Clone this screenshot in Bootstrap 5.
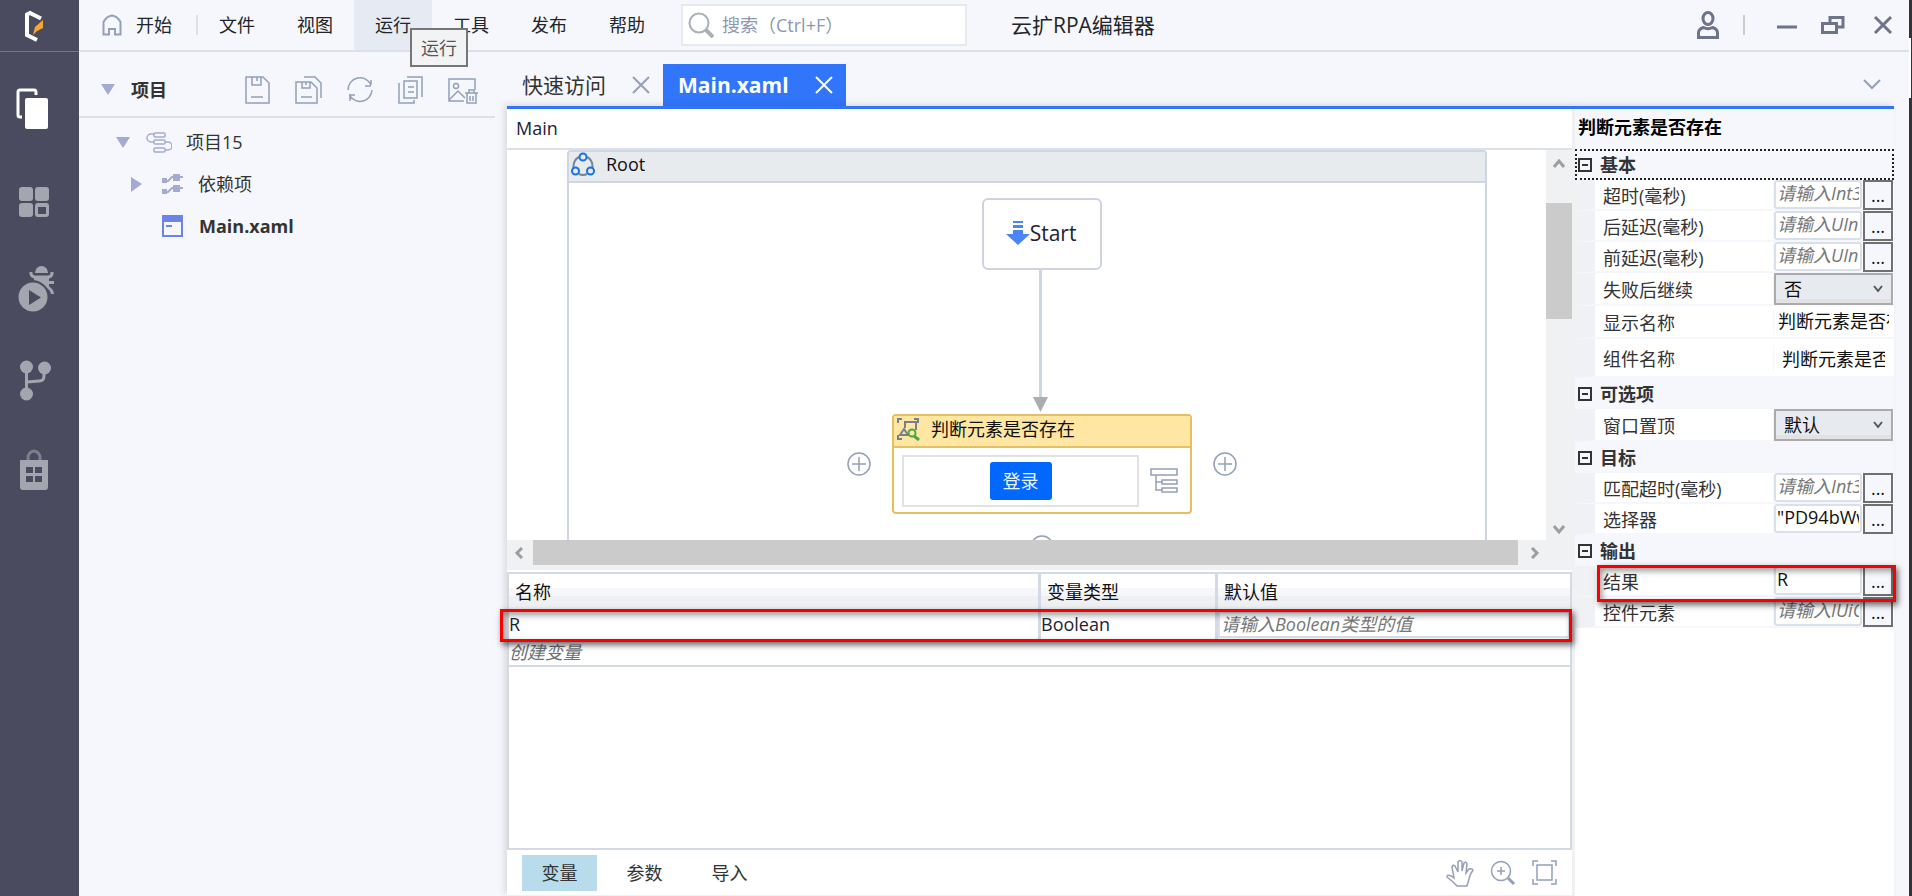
<!DOCTYPE html>
<html lang="zh-CN">
<head>
<meta charset="utf-8">
<meta name="viewport" content="width=device-width, initial-scale=1">
<title>云扩RPA编辑器</title>
<link href="https://cdn.jsdelivr.net/npm/bootstrap@5.3.0/dist/css/bootstrap.min.css" rel="stylesheet">
<style>
  body { font: 18px/24px "Open Sans", "Noto Sans CJK SC", sans-serif; color: #333; background: #f6f7fc; }
  button { font: inherit; color: inherit; background: none; border: 0; padding: 0; }
  input, select { font: inherit; border-radius: 0; }
  a { color: inherit; text-decoration: none; }
  svg { display: block; flex: none; fill: none; stroke: #93a0b8; stroke-width: 2; }

  .edge { width: 3px; background: linear-gradient(#333 38px, #fff 38px, #fff 98px, #333 98px); border-right: 1px solid #333; }

  .rail { width: 79px; background: #4a4b5e; }
  .rail-logo { height: 52px; border-bottom: 1px solid #71768a; padding-left: 23px; }
  .rail-btn { height: 90px; padding-left: 14px; }
  .rail-btn svg { fill: #a3a5af; stroke: none; }
  .rail-list { padding-top: 12px; }

  .topbar { height: 52px; border-bottom: 2px solid #dbe0ea; }
  .menu-item { width: 78px; height: 50px; }
  .menu-item.active { background: #e5eaf3; }
  .menu-home { padding-left: 23px; gap: 14px; height: 50px; width: 117px; }
  .split { width: 2px; height: 20px; background: #dbe0ea; }
  .split.dim { background: #ccc; }
  .tip { left: 56px; top: 28px; width: 58px; height: 39px; border: 2px solid #767676; background: #f2f3f5; color: #575757; z-index: 5; }
  .search { width: 286px; height: 42px; background: #fff; border: 2px solid #e5eaf1; margin-left: 15px; padding-left: 5px; gap: 8px; }
  .search input { border: 0; outline: 0; padding: 0; width: 230px; }
  .search input::placeholder { color: #8e98b0; font-style: normal; }
  .app-title { font-size: 21px; margin-left: 44px; }
  .win-tools { margin-right: 16px; }
  .win-tools svg { stroke: #6d7489; stroke-width: 3; }

  .explorer { width: 416px; margin-right: 12px; }
  .explorer-head { height: 66px; border-bottom: 2px solid #dbe0ea; padding: 12px 17px 0 22px; }
  .explorer-tools { gap: 25px; }
  .tree-list { padding-top: 3px; }
  .tree-list li { height: 42px; }
  .tree-list .lv1 { padding-left: 37px; }
  .tree-list .lv2 { padding-left: 52px; }
  .tree-list .lv3 { padding-left: 83px; }
  .tree-list .glyph { margin: 0 14px 0 16px; }
  .caret { fill: #a3abd1; stroke: none; }

  .tabs { height: 54px; }
  .doc-tab { height: 42px; width: 156px; font-size: 21px; padding: 0 13px 0 15px; }
  .doc-tab.active { background: #3175fb; color: #fff; font-weight: 700; width: 183px; }
  .doc-tab.active svg { stroke: #fff; }
  .work { border-top: 3px solid #3175fb; box-shadow: -3px -2px 6px rgba(60, 60, 60, .14); margin-right: 15px; }
  .crumb { height: 41px; border-bottom: 2px solid #dbe0ea; padding-left: 9px; padding-bottom: 1px; }
  .editor { background: #fff; color: #1c2333; min-width: 0; }

  .stage { height: 390px; }
  .free-canvas { background: #fff; overflow: hidden; }
  .root-box { left: 60px; right: 59px; top: 0; height: 420px; border: 2px solid #cfd6e3; border-radius: 4px 4px 0 0; }
  .root-head { height: 31px; background: #e7ebee; border-bottom: 2px solid #cfd6e3; color: #111; gap: 11px; padding-left: 2px; padding-bottom: 5px; }
  .start-node { left: 475px; top: 48px; width: 120px; height: 72px; border: 2px solid #cfd3e1; border-radius: 6px; background: #fff; font-size: 21px; padding: 0 2px 2px 0; }
  .wires { left: 0; top: 0; }
  .act-node { left: 385px; top: 264px; width: 300px; height: 100px; border: 2px solid #e6c060; border-radius: 4px; background: #fff; }
  .act-head { height: 32px; background: #ffe6a2; border-bottom: 2px solid #e6c060; color: #111; gap: 11px; padding: 0 2px 4px; }
  .act-body { padding: 8px 12px 6px 8px; height: 64px; }
  .shot { width: 237px; height: 52px; border: 2px solid #e2e2e2; }
  .login-btn { width: 62px; height: 38px; background: #0068ff; color: #e6f4ff; border-radius: 3px; }
  .plus-l { left: 340px; top: 302px; }
  .plus-r { left: 706px; top: 302px; }
  .plus-b { left: 523px; top: 385px; }

  .vbar { width: 26px; background: #f0f1f3; padding-top: 8px; }
  .vthumb { height: 116px; background: #cbcbcb; margin-top: 33px; }
  .vbar svg, .hbar svg { stroke: #9c9ea3; stroke-width: 3; }
  .hbar { height: 30px; background: #f0f1f3; padding: 0 24px 5px 7px; }
  .hthumb { height: 25px; background: #cbcbcb; margin: 0 10px 0 7px; }

  .vars { border: 2px solid #d3dae6; margin-top: 2px; }
  .var-table { table-layout: fixed; width: 100%; border-collapse: collapse; }
  .var-table .c-name { width: 50%; }
  .var-table .c-type { width: 177px; }
  .var-table th { font-weight: 400; color: #111; height: 35px; padding: 0 6px; background: linear-gradient(#fff 14px, #f6f7fb 14px, #f6f7fb 22px, #eff0f3 22px); border-right: 3px solid #d3dae6; }
  .var-table td { height: 31px; padding: 0 0 1px; border-right: 3px solid #d3dae6; }
  .var-table th:last-child, .var-table td:last-child { border-right: 0; }
  .var-table tr.new td { height: 24px; border-right: 0; border-bottom: 2px solid #d3dae6; color: #6b6f76; font-style: italic; }
  .var-table input { border: 2px solid #dbe1ec; width: 100%; height: 27px; padding: 0 1px 1px; outline: 0; display: block; }
  input::placeholder { color: #777; font-style: italic; opacity: 1; }
  .callout { position: absolute; border: 3px solid #f80000; box-shadow: 2px 3px 6px rgba(0, 0, 0, .6), inset 2px 3px 6px rgba(0, 0, 0, .4); pointer-events: none; z-index: 3; }
  .callout-var { left: -9px; right: -2px; top: 35px; height: 33px; }
  .callout-prop { left: 2px; right: -2px; top: -1px; height: 37px; }

  .foot { height: 46px; padding-left: 15px; padding-right: 15px; border-bottom: 1px solid #f0f1f3; color: #333; }
  .foot-tab { height: 36px; width: 75px; margin-right: 10px; }
  .foot-tab.active { background: #b9dcec; }

  .props { width: 322px; background: #fff; border-left: 3px solid #f0f1f3; }
  .props-title { height: 40px; background: #f6f7fc; color: #000; font-weight: 700; padding: 0 0 4px 3px; }
  .cat { height: 31px; background: #f6f7fc; font-weight: 700; padding-left: 3px; gap: 8px; }
  .cat.focus { border: 2px dotted #222; padding-left: 1px; }
  .cat svg { stroke: #333; }
  .prop { height: 31px; border-left: 20px solid #f0f1f4; border-bottom: 2px solid #f6f7fc; padding-right: 1px; }
  .prop.h-mid { height: 33px; }
  .prop.h-tall { height: 39px; }
  .prop label { width: 179px; padding: 2px 0 0 8px; border-right: 1px solid #f6f7fc; }
  .prop input { flex: 1; min-width: 0; height: 29px; padding: 0 1px 3px; border: 2px solid #d9e0ec; border-radius: 3px; outline: 0; color: #111; }
  .prop input.bare { border: 0; padding: 0 4px 3px; }
  .prop input.inset { border: 0; padding: 0; margin: 0 8px; }
  .prop select { flex: 1; min-width: 0; height: 32px; padding: 1px 8px 0; border: 2px solid #ababab; color: #111; appearance: none; background: linear-gradient(#e7ebef 24px, #e2e2e2 24px); }
  .prop .pick { position: relative; flex: 1; display: flex; }
  .prop .pick svg { position: absolute; right: 10px; top: 12px; stroke: #555; pointer-events: none; }
  .more { width: 30px; height: 30px; border: 2px solid #707070; background: #f6f7fc; color: #111; margin-left: 1px; line-height: 26px; }
</style>
</head>
<body class="d-flex vh-100 overflow-hidden">

<nav class="rail d-flex flex-column flex-shrink-0" aria-label="侧栏">
  <div class="rail-logo d-flex align-items-center">
    <svg width="22" height="32" viewBox="0 0 22 32"><path d="M18 8.500 7 3 4 4.500v20.500l10 5" style="stroke:#fff;stroke-width:4"/><path d="M20 10v8l-6 3-4 4 2-8z" style="fill:#fba62c;stroke:none"/></svg>
  </div>
  <div class="rail-list d-flex flex-column">
    <button class="rail-btn" aria-label="项目"><svg width="40" height="50" viewBox="0 0 40 50"><path d="M22 11V8q0-2-2-2H6Q4 6 4 8v23q0 2 2 2h2" style="fill:none;stroke:#fff;stroke-width:3"/><rect x="11" y="14" width="23" height="31" rx="2" style="fill:#fff"/></svg></button>
    <button class="rail-btn" aria-label="组件"><svg width="40" height="50" viewBox="0 0 40 50"><rect x="5" y="13" width="14" height="14" rx="3"/><rect x="21" y="13" width="14" height="14" rx="3"/><rect x="5" y="29" width="14" height="14" rx="3"/><path fill-rule="evenodd" d="M24 29h8q3 0 3 3v8q0 3-3 3h-8q-3 0-3-3v-8q0-3 3-3zm0 4v7h8v-7z"/></svg></button>
    <button class="rail-btn" aria-label="调试"><svg width="40" height="50" viewBox="0 0 40 50"><path d="M21 9a6.500 7 0 0 1 13 0z"/><path d="M17 8v2q1 3 4 3h13q3 0 4-3V8" style="fill:none;stroke:#a3a5af;stroke-width:3"/><path d="M20 13h15v9l3 3q2 2 2 5h-3q0-3-3-5-6-8-14-9z"/><path d="M34 18.500h6" style="stroke:#a3a5af;stroke-width:3"/><circle cx="19" cy="33" r="14.500"/><path d="M15 26v15l12-7.500z" style="fill:#4a4b5e"/></svg></button>
    <button class="rail-btn" aria-label="版本"><svg width="40" height="50" viewBox="0 0 40 50"><circle cx="12.500" cy="13" r="6.500"/><circle cx="30.500" cy="14" r="6.500"/><circle cx="12.500" cy="40" r="6.500"/><path d="M12.500 13v27M13 28l12-1q5 0 5-5v-6" style="fill:none;stroke:#a3a5af;stroke-width:3"/></svg></button>
    <button class="rail-btn" aria-label="市场"><svg width="40" height="50" viewBox="0 0 40 50"><path d="M14 17v-3a6 7 0 0 1 12 0v3" style="fill:none;stroke:#7d7f8b;stroke-width:3"/><path fill-rule="evenodd" d="M6 16h28v27q0 3-3 3H9q-3 0-3-3zm6 7v6h7v-6zm9 0v6h7v-6zm-9 9v6h7v-6zm9 0v6h7v-6z"/></svg></button>
  </div>
</nav>

<div class="d-flex flex-column flex-grow-1 overflow-hidden">
  <header class="topbar d-flex align-items-center flex-shrink-0 text-dark">
    <button class="menu-home d-flex align-items-center"><svg width="20" height="22" viewBox="0 0 20 22"><path d="M1.500 8Q5 2 10 1.500 15 2 18.500 8v12.500H13V15H7v5.500H1.500z"/></svg>开始</button>
    <span class="split"></span>
    <nav class="d-flex" aria-label="菜单">
      <button class="menu-item">文件</button>
      <button class="menu-item">视图</button>
      <div class="position-relative"><button class="menu-item active">运行</button><div class="tip position-absolute d-flex align-items-center justify-content-center" role="tooltip">运行</div></div>
      <button class="menu-item">工具</button>
      <button class="menu-item">发布</button>
      <button class="menu-item">帮助</button>
    </nav>
    <div class="search d-flex align-items-center">
      <svg width="26" height="26" viewBox="0 0 26 26" style="stroke:#aab0b6"><circle cx="11" cy="11" r="9.500"/><path d="m18 18 7 7" style="stroke-width:4"/></svg>
      <input type="text" placeholder="搜索（Ctrl+F）" aria-label="搜索">
    </div>
    <span class="app-title">云扩RPA编辑器</span>
    <div class="win-tools d-flex align-items-center ms-auto">
      <button aria-label="用户"><svg width="22" height="28" viewBox="0 0 22 28"><ellipse cx="11" cy="7.500" rx="5" ry="6"/><path d="M1.500 26.500V22q0-4 5-5.500Q11 19 15.500 16.500q5 1.500 5 5.500v4.500z"/></svg></button>
      <span class="split dim ms-4 me-4"></span>
      <button class="ms-2" aria-label="最小化"><svg width="20" height="20" viewBox="0 0 20 20"><path d="M0 12h20"/></svg></button>
      <button class="ms-4" aria-label="还原"><svg width="24" height="20" viewBox="0 0 24 20"><path d="M1.500 8.500h14v9h-14zM9 8V2.500h13V12h-6"/></svg></button>
      <button class="ms-4 ps-1" aria-label="关闭"><svg width="20" height="20" viewBox="0 0 20 20"><path d="m2 2 16 16M18 2 2 18"/></svg></button>
    </div>
  </header>

  <div class="d-flex flex-grow-1 overflow-hidden">
    <aside class="explorer flex-shrink-0">
      <div class="explorer-head d-flex align-items-center">
        <svg class="caret" width="14" height="12" viewBox="0 0 14 12"><path d="M0 0h14L7 11z"/></svg>
        <strong class="ms-3">项目</strong>
        <div class="explorer-tools d-flex ms-auto">
          <button aria-label="保存"><svg width="25" height="28" viewBox="0 0 25 28" style="stroke-width:1.500"><path d="M1 1h17l6 6v20H1zM7 1v8h9V1M12 1v4M6 21h12"/></svg></button>
          <button aria-label="全部保存"><svg width="27" height="28" viewBox="0 0 27 28" style="stroke-width:1.500"><path d="M1 6h15l6 6v15H1zM7 6v6h8V6M11 6v3M6 21h11M9 1h11l6 6v15"/></svg></button>
          <button aria-label="刷新"><svg width="26" height="28" viewBox="0 0 26 28" style="stroke-width:1.500"><path d="M1 14A12 12 0 0 1 24 9V4M24 10h-6M25 14A12 12 0 0 1 3 20v5M2 19h6"/></svg></button>
          <button aria-label="复制"><svg width="25" height="28" viewBox="0 0 25 28" style="stroke-width:1.500"><path d="M6 5h13v17H6zM9 1h15v20M1 7v20h15v-3M10 11h6M10 16h6"/></svg></button>
          <button aria-label="清理图片"><svg width="30" height="28" viewBox="0 0 30 28" style="stroke-width:1.500"><path d="M16 25H1V3h26v11M1 24l9-9 7 7"/><circle cx="8" cy="10" r="2.500"/><path d="M17 17h13M21 17v-3h5v3M19 17v10h9V17M22 20v5M25 20v5"/></svg></button>
        </div>
      </div>
      <ul class="tree-list list-unstyled m-0">
        <li class="lv1 d-flex align-items-center"><svg class="caret" width="14" height="12" viewBox="0 0 14 12"><path d="M0 1h14L7 12z"/></svg>
          <svg class="glyph" width="26" height="22" viewBox="0 0 26 22" style="stroke:#a3abd1;stroke-width:1.500"><rect x="8" y="2" width="11" height="4" rx="1"/><rect x="8" y="9" width="11" height="4" rx="1"/><rect x="8" y="17" width="11" height="4" rx="1"/><path d="M8 3H5a4 4 0 0 0 0 8h3M19 11h3a4 4 0 0 1 0 8h-3"/></svg>项目15</li>
        <li class="lv2 d-flex align-items-center"><svg class="caret" width="12" height="16" viewBox="0 0 12 16"><path d="M0 1v15l11-8z"/></svg>
          <svg class="glyph" width="25" height="22" viewBox="0 0 25 22" style="stroke:#a3abd1;fill:#a3abd1"><path d="M4 8h5l4-4h11M4 19h5l4-4h11" fill="none"/><path d="M4 6h3v3H4zM4 17h3v3H4zM15 2h5v5h-5zM15 13h5v5h-5z"/></svg>依赖项</li>
        <li class="lv3 d-flex align-items-center gap-3"><svg width="21" height="22" viewBox="0 0 21 22" style="stroke:#6a84e8"><path d="M1 1h19v20H1z"/><path d="M0 0h21v7H0z" style="fill:#6a84e8;stroke:none"/><path d="M4 11h6"/></svg><strong>Main.xaml</strong></li>
      </ul>
    </aside>

    <main class="d-flex flex-column flex-grow-1">
      <div class="tabs d-flex align-items-end flex-shrink-0">
        <div class="doc-tab d-flex align-items-center justify-content-between"><a href="#">快速访问</a><button aria-label="关闭快速访问"><svg width="18" height="18" viewBox="0 0 18 18"><path d="m1 1 16 16M17 1 1 17"/></svg></button></div>
        <div class="doc-tab active d-flex align-items-center justify-content-between"><a href="#">Main.xaml</a><button aria-label="关闭Main.xaml"><svg width="18" height="18" viewBox="0 0 18 18"><path d="m1 1 16 16M17 1 1 17"/></svg></button></div>
        <button class="ms-auto me-4 mb-3" aria-label="更多标签"><svg class="me-1" width="18" height="12" viewBox="0 0 18 12"><path d="m1 2 8 8 8-8"/></svg></button>
      </div>

      <div class="work d-flex flex-grow-1">
        <section class="editor d-flex flex-column flex-grow-1">
          <div class="crumb d-flex align-items-center flex-shrink-0">Main</div>
          <div class="stage d-flex flex-shrink-0">
            <div class="free-canvas position-relative flex-grow-1">
              <div class="root-box position-absolute">
                <div class="root-head d-flex align-items-center">
                  <svg width="24" height="24" viewBox="0 0 24 24" style="stroke:#1473e6"><path d="M8 5Q2 8 2.500 16M16 5q6 3 5.500 11M8 22q4 2 8 0" style="stroke:#76849a"/><circle cx="12" cy="5" r="3.500"/><circle cx="4.500" cy="19" r="3.500"/><circle cx="19.500" cy="19" r="3.500"/></svg>Root
                </div>
              </div>
              <svg class="wires position-absolute" width="700" height="270" viewBox="0 0 700 270"><path d="M533.500 120v128" style="stroke:#cfd6e3;stroke-width:3"/><path d="M526 247h15l-7.500 15z" style="fill:#adadad;stroke:none"/></svg>
              <div class="start-node position-absolute d-flex align-items-center justify-content-center">
                <svg width="24" height="24" viewBox="0 0 24 24" style="fill:#4a84f5;stroke:none"><path d="M7 0h10v2H7zM7 4h10v3H7zM7 9h10v4h7L12 24 0 13h7z"/></svg>Start
              </div>
              <div class="act-node position-absolute">
                <div class="act-head d-flex align-items-center">
                  <svg width="24" height="24" viewBox="0 0 24 24" style="stroke:#7a7f8c"><path d="M2 6V2h4M18 2h4v4M2 18v4h4M9 11V5h11v8M4 18l4-6 4 6z"/><circle cx="16" cy="16" r="3.500" style="stroke:#4fa64a"/><path d="m18 19 5 4" style="stroke:#4fa64a;stroke-width:3"/></svg>判断元素是否存在
                </div>
                <div class="act-body d-flex align-items-center justify-content-between">
                  <div class="shot d-flex align-items-center justify-content-center"><button class="login-btn">登录</button></div>
                  <svg width="28" height="26" viewBox="0 0 28 26" style="stroke-width:1.500"><path d="M1 1h26v6H1zM12 12h15v4H12zM12 20h15v4H12zM6 7v15h6M6 14h6"/></svg>
                </div>
              </div>
              <button class="plus-l position-absolute" aria-label="添加左侧"><svg width="24" height="24" viewBox="0 0 24 24" style="stroke-width:1.500"><circle cx="12" cy="12" r="11"/><path d="M12 5v14M5 12h14"/></svg></button>
              <button class="plus-r position-absolute" aria-label="添加右侧"><svg width="24" height="24" viewBox="0 0 24 24" style="stroke-width:1.500"><circle cx="12" cy="12" r="11"/><path d="M12 5v14M5 12h14"/></svg></button>
              <button class="plus-b position-absolute" aria-label="添加下方"><svg width="24" height="24" viewBox="0 0 24 24" style="stroke-width:1.500"><circle cx="12" cy="12" r="11"/><path d="M12 5v14M5 12h14"/></svg></button>
            </div>
            <div class="vbar d-flex flex-column">
              <svg class="mx-auto" width="12" height="12" viewBox="0 0 12 12"><path d="m1 9 5-6 5 6"/></svg>
              <div class="vthumb"></div>
              <svg class="mx-auto mt-auto mb-1" width="12" height="14" viewBox="0 0 12 14"><path d="m1 4 5 6 5-6"/></svg>
            </div>
          </div>
          <div class="hbar d-flex align-items-center flex-shrink-0">
            <svg width="12" height="12" viewBox="0 0 12 12"><path d="M8 1 3 6l5 5"/></svg>
            <div class="hthumb flex-grow-1"></div>
            <svg class="me-2" width="12" height="12" viewBox="0 0 12 12"><path d="m4 1 5 5-5 5"/></svg>
          </div>
          <div class="vars flex-grow-1 position-relative">
            <table class="var-table">
              <colgroup><col class="c-name"><col class="c-type"><col></colgroup>
              <thead><tr><th>名称</th><th>变量类型</th><th>默认值</th></tr></thead>
              <tbody>
                <tr><td>R</td><td>Boolean</td><td><input type="text" placeholder="请输入Boolean类型的值" aria-label="默认值"></td></tr>
                <tr class="new"><td colspan="3">创建变量</td></tr>
              </tbody>
            </table>
            <div class="callout callout-var"></div>
          </div>
          <div class="foot d-flex align-items-center flex-shrink-0">
            <button class="foot-tab active">变量</button>
            <button class="foot-tab">参数</button>
            <button class="foot-tab">导入</button>
            <div class="d-flex align-items-center gap-3 ms-auto">
              <button aria-label="平移"><svg width="28" height="28" viewBox="0 0 28 28" style="stroke-width:1.500"><path d="M11 27 7 23 1 18q0-3 4-1l3 2-2-11q1-3 3-1l3 6V3q2-3 4 0v9l2-8q2-2 3 1l-1 9 3-4q3-1 4 1-3 4-4 9l-2 7z"/></svg></button>
              <button aria-label="放大"><svg width="26" height="26" viewBox="0 0 26 26" style="stroke-width:1.500"><circle cx="11" cy="11" r="9.500"/><path d="M7 11h8M11 7v8"/><path d="m18 18 6 6" style="stroke-width:3"/></svg></button>
              <button aria-label="适应窗口"><svg width="25" height="25" viewBox="0 0 25 25" style="stroke-width:1.500"><path d="M1 6V1h5M19 1h5v5M24 19v5h-5M6 24H1v-5M5 5h15v15H5z"/></svg></button>
            </div>
          </div>
        </section>

        <section class="props flex-shrink-0">
          <div class="props-title d-flex align-items-center">判断元素是否存在</div>
          <div class="cat focus d-flex align-items-center"><svg width="14" height="14" viewBox="0 0 14 14"><path d="M1 1h12v12H1zM4 7h6"/></svg>基本</div>
          <div class="prop d-flex align-items-center"><label for="p1">超时(毫秒)</label><input id="p1" type="text" placeholder="请输入Int32类型的值"><button class="more">...</button></div>
          <div class="prop d-flex align-items-center"><label for="p2">后延迟(毫秒)</label><input id="p2" type="text" placeholder="请输入UInt32类型的值"><button class="more">...</button></div>
          <div class="prop d-flex align-items-center"><label for="p3">前延迟(毫秒)</label><input id="p3" type="text" placeholder="请输入UInt32类型的值"><button class="more">...</button></div>
          <div class="prop h-mid d-flex align-items-center"><label for="p4">失败后继续</label><span class="pick"><select id="p4"><option>否</option></select><svg width="10" height="8" viewBox="0 0 10 8"><path d="m1 1 4 5 4-5"/></svg></span></div>
          <div class="prop h-mid d-flex align-items-center"><label for="p5">显示名称</label><input id="p5" class="bare" type="text" value="判断元素是否存在"></div>
          <div class="prop h-tall d-flex align-items-center"><label for="p6">组件名称</label><input id="p6" class="inset" type="text" value="判断元素是否存在"></div>
          <div class="cat d-flex align-items-center"><svg width="14" height="14" viewBox="0 0 14 14"><path d="M1 1h12v12H1zM4 7h6"/></svg>可选项</div>
          <div class="prop h-mid d-flex align-items-center"><label for="p7">窗口置顶</label><span class="pick"><select id="p7"><option>默认</option></select><svg width="10" height="8" viewBox="0 0 10 8"><path d="m1 1 4 5 4-5"/></svg></span></div>
          <div class="cat d-flex align-items-center"><svg width="14" height="14" viewBox="0 0 14 14"><path d="M1 1h12v12H1zM4 7h6"/></svg>目标</div>
          <div class="prop d-flex align-items-center"><label for="p8">匹配超时(毫秒)</label><input id="p8" type="text" placeholder="请输入Int32类型的值"><button class="more">...</button></div>
          <div class="prop d-flex align-items-center"><label for="p9">选择器</label><input id="p9" type="text" value="&quot;PD94bWwgdmVyc2lvbj0"><button class="more">...</button></div>
          <div class="cat d-flex align-items-center"><svg width="14" height="14" viewBox="0 0 14 14"><path d="M1 1h12v12H1zM4 7h6"/></svg>输出</div>
          <div class="prop position-relative d-flex align-items-center"><label for="p10">结果</label><input id="p10" type="text" value="R"><button class="more">...</button><div class="callout callout-prop"></div></div>
          <div class="prop d-flex align-items-center"><label for="p11">控件元素</label><input id="p11" type="text" placeholder="请输入IUiObject类型的值"><button class="more">...</button></div>
        </section>
      </div>
    </main>
  </div>
</div>
<div class="edge flex-shrink-0"></div>
<script src="https://cdn.jsdelivr.net/npm/bootstrap@5.3.0/dist/js/bootstrap.bundle.min.js"></script>
</body>
</html>
